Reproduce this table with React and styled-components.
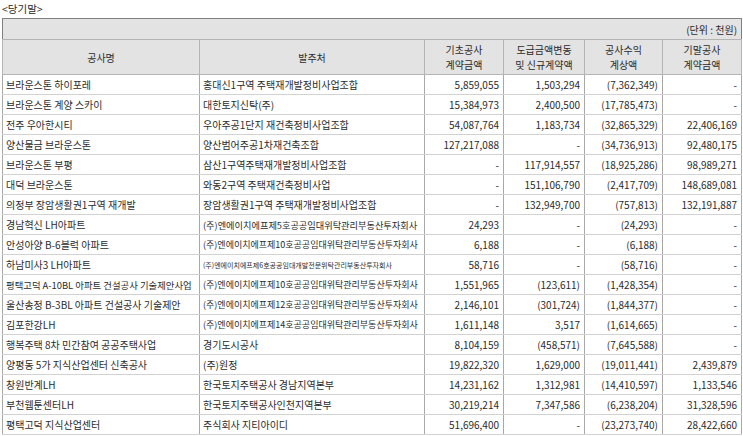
import React from 'react';
import styled, { createGlobalStyle } from 'styled-components';

const GlobalStyle = createGlobalStyle`
  body {
    margin: 0;
    background: #fff;
    font-family: "Noto Sans CJK KR", "Liberation Sans", sans-serif;
    color: #2b2b2b;
  }
`;

const Page = styled.div`
  padding: 0 2px;
  width: 739px;
`;

const Title = styled.div`
  height: 18px;
  line-height: 17px;
  font-size: 10.5px;
`;

const Table = styled.table`
  width: 739px;
  border-collapse: collapse;
  table-layout: fixed;
  border: 1px solid #808080;
  font-size: 10px;
`;

const UnitCell = styled.th`
  height: 20px;
  padding: 0 4px;
  background: #e3e3e3;
  font-weight: 400;
  text-align: right;
  border-bottom: 1px solid #b5b5b5;
`;

const HeadCell = styled.th`
  height: 34px;
  padding: 0 2px;
  background: #e3e3e3;
  font-weight: 400;
  line-height: 15px;
  text-align: center;
  border: 1px solid #b5b5b5;
`;

const Cell = styled.td`
  height: 19px;
  padding: 0 ${p => (p.$num ? '4px' : '3px')};
  text-align: ${p => (p.$num ? 'right' : 'left')};
  font-size: ${p => p.$size || '10px'};
  white-space: nowrap;
  overflow: hidden;
  border-top: 1px solid #d2d2d2;
  border-bottom: 1px solid #d2d2d2;
  border-left: 1px solid #a8a8a8;
  border-right: 1px solid #a8a8a8;
`;

const cols = [197, 225, 79, 81, 78, 79];

// [공사명, 발주처, 기초, 변동, 수익, 기말, 발주처 글자크기, 공사명 글자크기]
const rows = [
  ['브라운스톤 하이포레', '홍대신1구역 주택재개발정비사업조합', '5,859,055', '1,503,294', '(7,362,349)', '-'],
  ['브라운스톤 계양 스카이', '대한토지신탁(주)', '15,384,973', '2,400,500', '(17,785,473)', '-'],
  ['전주 우아한시티', '우아주공1단지 재건축정비사업조합', '54,087,764', '1,183,734', '(32,865,329)', '22,406,169'],
  ['양산물금 브라운스톤', '양산범어주공1차재건축조합', '127,217,088', '-', '(34,736,913)', '92,480,175'],
  ['브라운스톤 부평', '삼산1구역주택재개발정비사업조합', '-', '117,914,557', '(18,925,286)', '98,989,271'],
  ['대덕 브라운스톤', '와동2구역 주택재건축정비사업', '-', '151,106,790', '(2,417,709)', '148,689,081'],
  ['의정부 장암생활권1구역 재개발', '장암생활권1구역 주택재개발정비사업조합', '-', '132,949,700', '(757,813)', '132,191,887'],
  ['경남혁신 LH아파트', '(주)엔에이치에프제5호공공임대위탁관리부동산투자회사', '24,293', '-', '(24,293)', '-', '9.2px'],
  ['안성아양 B-6블럭 아파트', '(주)엔에이치에프제10호공공임대위탁관리부동산투자회사', '6,188', '-', '(6,188)', '-', '9px'],
  ['하남미사3 LH아파트', '(주)엔에이치에프제6호공공임대개발전문위탁관리부동산투자회사', '58,716', '-', '(58,716)', '-', '7px'],
  ['평택고덕 A-10BL 아파트 건설공사 기술제안사업', '(주)엔에이치에프제10호공공임대위탁관리부동산투자회사', '1,551,965', '(123,611)', '(1,428,354)', '-', '9px', '9.4px'],
  ['울산송정 B-3BL 아파트 건설공사 기술제안', '(주)엔에이치에프제12호공공임대위탁관리부동산투자회사', '2,146,101', '(301,724)', '(1,844,377)', '-', '9px'],
  ['김포한강LH', '(주)엔에이치에프제14호공공임대위탁관리부동산투자회사', '1,611,148', '3,517', '(1,614,665)', '-', '9px'],
  ['행복주택 8차 민간참여 공공주택사업', '경기도시공사', '8,104,159', '(458,571)', '(7,645,588)', '-'],
  ['양평동 5가 지식산업센터 신축공사', '(주)원정', '19,822,320', '1,629,000', '(19,011,441)', '2,439,879'],
  ['창원반계LH', '한국토지주택공사 경남지역본부', '14,231,162', '1,312,981', '(14,410,597)', '1,133,546'],
  ['부천웹툰센터LH', '한국토지주택공사인천지역본부', '30,219,214', '7,347,586', '(6,238,204)', '31,328,596'],
  ['평택고덕 지식산업센터', '주식회사 지티아이디', '51,696,400', '-', '(23,273,740)', '28,422,660'],
];

export default function App() {
  return (
    <Page>
      <GlobalStyle />
      <Title>&lt;당기말&gt;</Title>
      <Table>
        <colgroup>
          {cols.map((w, i) => (
            <col key={i} style={{ width: w }} />
          ))}
        </colgroup>
        <thead>
          <tr>
            <UnitCell colSpan={6}>(단위 : 천원)</UnitCell>
          </tr>
          <tr>
            <HeadCell>공사명</HeadCell>
            <HeadCell>발주처</HeadCell>
            <HeadCell>기초공사<br />계약금액</HeadCell>
            <HeadCell>도급금액변동<br />및 신규계약액</HeadCell>
            <HeadCell>공사수익<br />계상액</HeadCell>
            <HeadCell>기말공사<br />계약금액</HeadCell>
          </tr>
        </thead>
        <tbody>
          {rows.map((r, i) => (
            <tr key={i}>
              <Cell $size={r[7]}>{r[0]}</Cell>
              <Cell $size={r[6]}>{r[1]}</Cell>
              <Cell $num>{r[2]}</Cell>
              <Cell $num>{r[3]}</Cell>
              <Cell $num>{r[4]}</Cell>
              <Cell $num>{r[5]}</Cell>
            </tr>
          ))}
        </tbody>
      </Table>
    </Page>
  );
}
